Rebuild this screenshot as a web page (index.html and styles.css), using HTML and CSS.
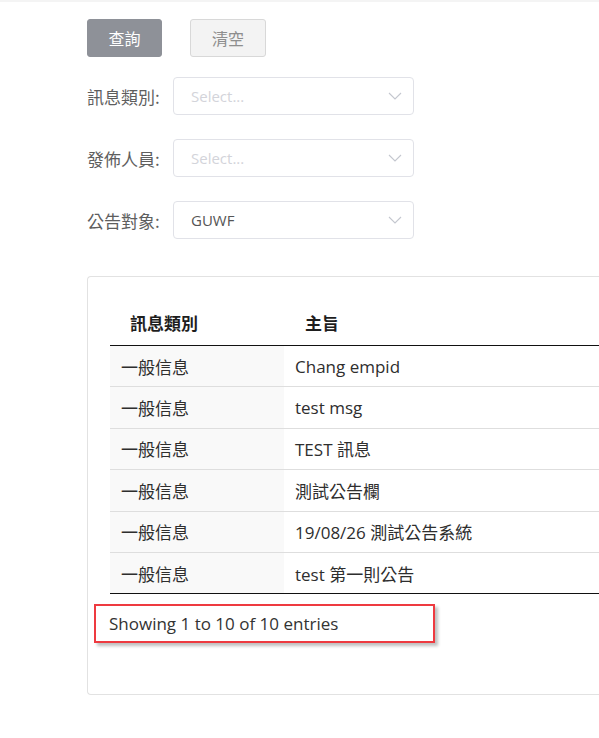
FILE: index.html
```html
<!DOCTYPE html>
<html lang="zh-Hant">
<head>
<meta charset="utf-8">
<title>公告查詢</title>
<link rel="stylesheet" href="styles.css">
</head>
<body>
<div class="topband"></div>
<main class="page">
  <div class="actions">
    <button class="btn btn-primary" type="button">查詢</button>
    <button class="btn btn-default" type="button">清空</button>
  </div>

  <form class="filters">
    <div class="field">
      <label class="field-label">訊息類別:</label>
      <div class="select">
        <span class="select-value placeholder">Select...</span>
        <svg class="chevron" viewBox="0 0 14 8" width="14" height="8"><path d="M1 1 L7 7 L13 1" fill="none" stroke="#c4c7cf" stroke-width="1.1"/></svg>
      </div>
    </div>
    <div class="field">
      <label class="field-label">發佈人員:</label>
      <div class="select">
        <span class="select-value placeholder">Select...</span>
        <svg class="chevron" viewBox="0 0 14 8" width="14" height="8"><path d="M1 1 L7 7 L13 1" fill="none" stroke="#c4c7cf" stroke-width="1.1"/></svg>
      </div>
    </div>
    <div class="field">
      <label class="field-label">公告對象:</label>
      <div class="select">
        <span class="select-value">GUWF</span>
        <svg class="chevron" viewBox="0 0 14 8" width="14" height="8"><path d="M1 1 L7 7 L13 1" fill="none" stroke="#c4c7cf" stroke-width="1.1"/></svg>
      </div>
    </div>
  </form>

  <section class="panel">
    <table class="grid">
      <thead>
        <tr><th class="col-type">訊息類別</th><th class="col-subject">主旨</th></tr>
      </thead>
      <tbody>
        <tr><td class="col-type">一般信息</td><td>Chang empid</td></tr>
        <tr><td class="col-type">一般信息</td><td>test msg</td></tr>
        <tr><td class="col-type">一般信息</td><td>TEST 訊息</td></tr>
        <tr><td class="col-type">一般信息</td><td>測試公告欄</td></tr>
        <tr><td class="col-type">一般信息</td><td>19/08/26 測試公告系統</td></tr>
        <tr><td class="col-type">一般信息</td><td>test 第一則公告</td></tr>
      </tbody>
    </table>
    <div class="info">Showing 1 to 10 of 10 entries</div>
  </section>
</main>
</body>
</html>
```

FILE: styles.css
```css
html {
  overflow: hidden;
}
body {
  margin: 0;
  background: #ffffff;
  font-family: "Segoe UI", "Open Sans", "Noto Sans CJK TC", sans-serif;
  font-size: 17px;
  color: #333333;
}
.topband {
  height: 2px;
  background: #f4f4f4;
}
.page {
  padding: 17px 0 0 87px;
}
.actions {
  display: flex;
  gap: 28px;
}
.btn {
  height: 38px;
  width: 75px;
  border-radius: 3px;
  font-family: "Noto Sans CJK TC", sans-serif;
  font-size: 16px;
  padding: 0;
  cursor: pointer;
}
.btn-primary {
  background: #8e9198;
  border: 1px solid #8e9198;
  color: #ffffff;
}
.btn-default {
  width: 76px;
  background: #f3f3f3;
  border: 1px solid #d8d8d8;
  color: #8e8e8e;
}
.filters {
  margin: 20px 0 0;
  display: flex;
  flex-direction: column;
  gap: 24px;
}
.field {
  display: flex;
  align-items: center;
}
.field-label {
  width: 86px;
  color: #5e5e5e;
  font-family: "Noto Sans CJK TC", sans-serif;
  font-size: 17px;
  white-space: nowrap;
}
.select {
  width: 241px;
  height: 38px;
  box-sizing: border-box;
  border: 1px solid #e1e2e8;
  border-radius: 4px;
  display: flex;
  align-items: center;
  justify-content: space-between;
  padding: 0 11px 0 17px;
}
.select-value {
  font-size: 15px;
  color: #555555;
}
.select-value.placeholder {
  color: #d3d4da;
}
.chevron {
  display: block;
}
.panel {
  margin-top: 37px;
  height: 419px;
  box-sizing: border-box;
  border: 1px solid #e2e2e2;
  border-right: none;
  border-radius: 4px 0 0 4px;
  padding: 23px 0 0 6px;
}
.grid {
  margin-left: 16px;
  width: calc(100% - 16px);
  border-collapse: collapse;
  font-size: 17px;
}
.grid th {
  height: 45px;
  text-align: left;
  font-weight: bold;
  color: #1e1e1e;
  font-family: "Noto Sans CJK TC", sans-serif;
  border-bottom: 1px solid #111111;
  padding: 0;
}
.grid th.col-type {
  padding-left: 20px;
}
.grid th.col-subject {
  padding-left: 21px;
}
.grid td {
  height: 40.4px;
  padding: 0 0 0 11px;
  border-bottom: 1px solid #dedede;
  color: #2e2e2e;
}
.grid td.col-type {
  width: 163px;
  background: #f9f9f9;
  font-family: "Noto Sans CJK TC", sans-serif;
}
.grid tbody tr:last-child td {
  border-bottom: 1px solid #111111;
}
.info {
  margin-top: 10px;
  width: 341px;
  height: 39px;
  box-sizing: border-box;
  border: 2px solid #ee3a40;
  box-shadow: 3px 3px 3px rgba(0, 0, 0, 0.25);
  display: flex;
  align-items: center;
  padding-left: 13px;
  font-size: 17px;
  color: #333333;
}
```
